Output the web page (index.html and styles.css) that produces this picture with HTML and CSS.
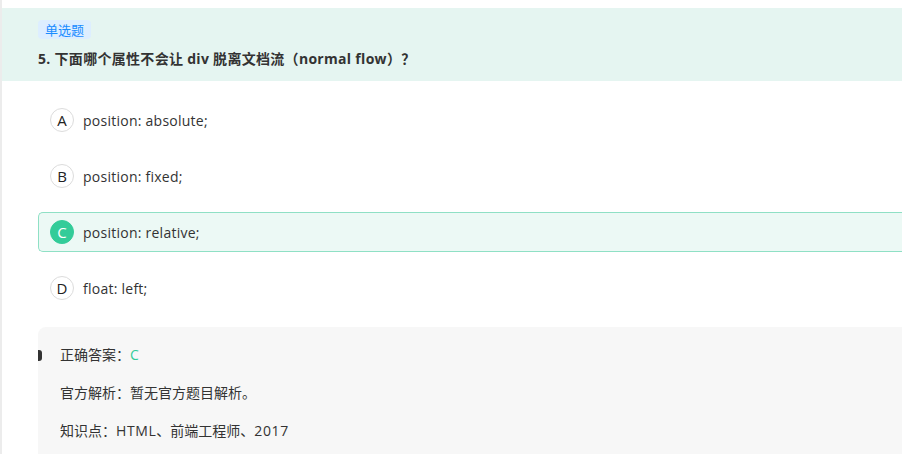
FILE: index.html
```html
<!DOCTYPE html>
<html lang="zh">
<head>
<meta charset="utf-8">
<link rel="stylesheet" href="styles.css">
</head>
<body>
<div class="page">
  <div class="q-head">
    <span class="q-tag">单选题</span>
    <div class="q-title">5. 下面哪个属性不会让 div 脱离文档流（normal flow）？</div>
  </div>
  <div class="options">
    <div class="option"><span class="opt-key">A</span><span class="opt-text">position: absolute;</span></div>
    <div class="option"><span class="opt-key">B</span><span class="opt-text">position: fixed;</span></div>
    <div class="option option-right"><span class="opt-key">C</span><span class="opt-text">position: relative;</span></div>
    <div class="option"><span class="opt-key">D</span><span class="opt-text">float: left;</span></div>
  </div>
  <div class="analysis">
    <span class="marker"></span>
    <div class="a-line">正确答案：<span class="answer">C</span></div>
    <div class="a-line">官方解析：暂无官方题目解析。</div>
    <div class="a-line last">知识点：<span class="latin">HTML</span>、前端工程师、<span class="latin">2017</span></div>
  </div>
</div>
</body>
</html>
```
FILE: styles.css
```css
html, body {
  margin: 0;
  padding: 0;
  background: #fff;
}
body {
  font-family: "Open Sans", "Noto Sans CJK SC", sans-serif;
  font-size: 14px;
  color: #333;
}
.page {
  border-left: 2px solid #ececec;
  padding-top: 8px;
  height: 446px;
  overflow: hidden;
}
.q-head {
  background: #e5f5f1;
  padding: 12px 36px 12px;
}
.q-tag {
  display: inline-block;
  font-family: "Noto Sans CJK SC", sans-serif;
  font-size: 13px;
  line-height: 19px;
  padding: 0 7px;
  background: #ddeeff;
  color: #1a8cff;
  border-radius: 4px;
}
.q-title {
  margin-top: 10px;
  font-family: "Open Sans", "Noto Sans CJK SC", sans-serif;
  font-weight: 700;
  font-size: 14px;
  line-height: 20px;
  letter-spacing: 0.3px;
  color: #333;
}
.options {
  padding: 19px 0 0 36px;
  display: flex;
  flex-direction: column;
  gap: 16px;
}
.option {
  height: 38px;
  display: flex;
  align-items: center;
  border: 1px solid transparent;
  border-right: none;
  border-radius: 5px 0 0 5px;
  padding-left: 11px;
}
.opt-key {
  width: 22px;
  height: 22px;
  border: 1px solid #dcdcdc;
  border-radius: 50%;
  display: flex;
  align-items: center;
  justify-content: center;
  font-size: 15px;
  color: #222;
  flex: none;
}
.opt-text {
  margin-left: 9px;
  font-size: 14px;
  letter-spacing: 0.25px;
  color: #333;
}
.option-right {
  background: #ecf9f5;
  border-color: #8fe0c5;
}
.option-right .opt-key {
  background: #33cc99;
  border-color: #33cc99;
  color: #fff;
}
.analysis {
  position: relative;
  margin: 19px 0 0 36px;
  background: #f7f7f7;
  border-radius: 8px 0 0 0;
  padding: 18px 0 20px 22px;
}
.marker {
  position: absolute;
  left: 0;
  top: 23px;
  width: 4px;
  height: 11px;
  background: #333;
  border-radius: 0 3px 3px 0;
}
.a-line {
  line-height: 20px;
  margin-bottom: 18px;
  color: #333;
}
.a-line.last {
  margin-bottom: 0;
}
.latin {
  letter-spacing: 0.6px;
}
.answer {
  color: #33cc99;
}
```
